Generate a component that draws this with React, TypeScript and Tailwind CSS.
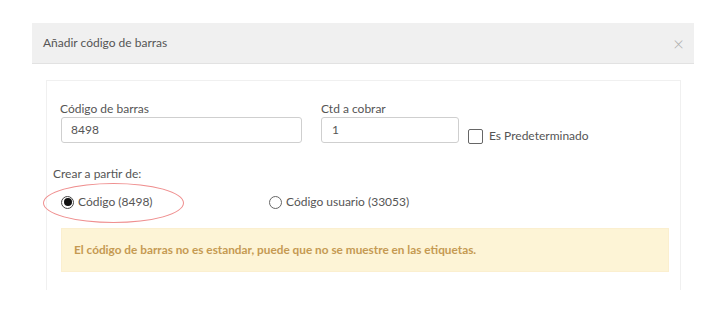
import React from "react";

export default function App() {
  return (
    <div className="relative w-[706px] h-[332px] bg-white font-['Lato','Noto_Sans',sans-serif] text-[#555]">
      <div className="pt-[23px] pl-[32px] pr-[12px]">
        <div className="h-[41px] bg-[#f0f0f0] border-b border-[#e2e2e2] flex items-center justify-between pl-[11px] pr-[10px]">
          <span className="text-[12px] text-[#555]">Añadir código de barras</span>
          <span className="text-[19px] leading-none text-[#b0b0b0] font-light">×</span>
        </div>
        <div className="mt-[16px] ml-[14px] mr-[13px] h-[210px] border-x border-t border-[#f0f0f0] pl-[14px] pr-[11px] pt-[20px]">
          <div className="flex items-start">
            <div className="flex flex-col w-[241px]">
              <label className="text-[12px] leading-[16px] -ml-px">Código de barras</label>
              <div className="h-[26px] border border-[#cfcfcf] rounded-[3px] flex items-center pl-[9px] text-[12px] text-[#555]">8498</div>
            </div>
            <div className="flex flex-col w-[138px] ml-[19px]">
              <label className="text-[12px] leading-[16px]">Ctd a cobrar</label>
              <div className="h-[26px] border border-[#cfcfcf] rounded-[3px] flex items-center pl-[10px] text-[12px] text-[#555]">1</div>
            </div>
            <div className="flex items-center ml-[9px] mt-[26px]">
              <span className="w-[15px] h-[15px] border border-[#666] rounded-[2px] bg-white" />
              <span className="ml-[6px] text-[12px]">Es Predeterminado</span>
            </div>
          </div>
          <div className="mt-[21px] -ml-[8px] text-[12px] leading-[16px]">Crear a partir de:</div>
          <div className="mt-[12px] flex items-center h-[16px]">
            <div className="flex items-center w-[208px]">
              <span className="w-[13px] h-[13px] rounded-full border border-[#444] flex items-center justify-center">
                <span className="w-[8px] h-[8px] rounded-full bg-[#111]" />
              </span>
              <span className="ml-[4px] text-[12px]">Código (8498)</span>
            </div>
            <div className="flex items-center">
              <span className="w-[13px] h-[13px] rounded-full border border-[#666]" />
              <span className="ml-[4px] text-[12px]">Código usuario (33053)</span>
            </div>
          </div>
          <div className="mt-[18px] h-[44px] bg-[#fdf4d6] border border-[#fbefcf] flex items-center pl-[12px]">
            <span className="text-[11.8px] font-bold text-[#c59a52]">El código de barras no es estandar, puede que no se muestre en las etiquetas.</span>
          </div>
        </div>
      </div>
      <div className="absolute left-[43px] top-[183px] w-[141px] h-[40px] rounded-[50%] border border-[#ef8f8f]" />
    </div>
  );
}
